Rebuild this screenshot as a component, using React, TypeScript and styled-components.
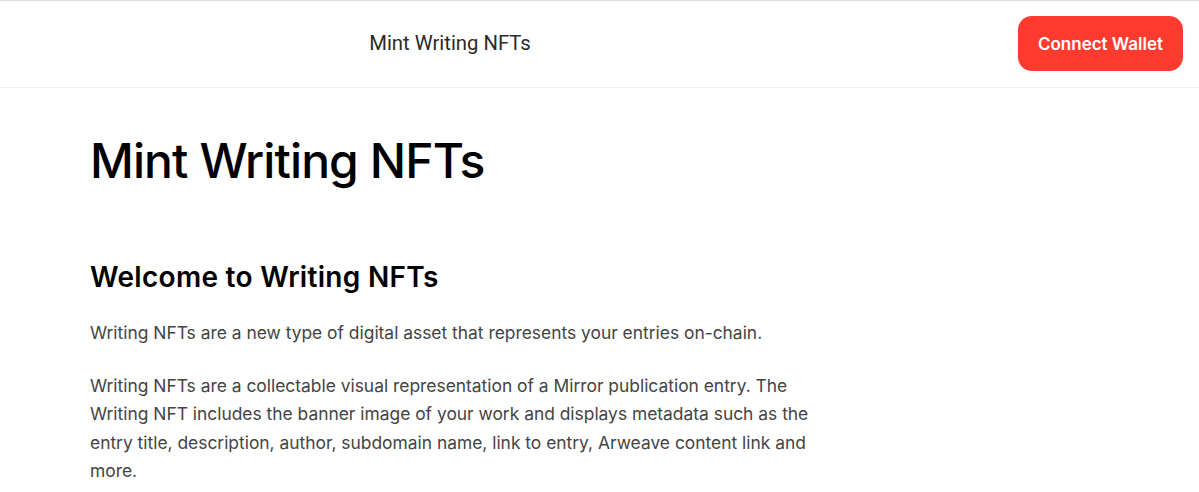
import React from "react";
import styled, { createGlobalStyle } from "styled-components";

const Global = createGlobalStyle`
  html, body { margin: 0; padding: 0; background: #fff; }
  body { font-family: Inter, "Noto Sans", sans-serif; -webkit-font-smoothing: antialiased; }
  * { box-sizing: border-box; }
`;

const Page = styled.div`
  width: 100%;
  min-height: 492px;
  border-top: 1px solid #dcdcdc;
`;

const Header = styled.header`
  height: 87px;
  display: flex;
  align-items: center;
  border-bottom: 1px solid #f1f1f1;
  padding-right: 16px;
`;

const NavTitle = styled.div`
  width: 720px;
  margin-left: 90px;
  margin-top: -2px;
  text-align: center;
  font-family: Roboto, "Noto Sans", sans-serif;
  font-size: 20.3px;
  color: #2a2a2a;
`;

const Spacer = styled.div`
  flex: 1;
`;

const ConnectButton = styled.button`
  height: 55px;
  padding: 0 20px;
  border: none;
  border-radius: 14px;
  background: #ff3b30;
  color: #fff;
  font-family: Inter, sans-serif;
  font-weight: 600;
  font-size: 17px;
  cursor: pointer;
  margin-top: -1px;
`;

const Main = styled.main`
  max-width: 724px;
  margin-left: 90px;
  padding-top: 41px;
`;

const Title = styled.h1`
  margin: 0;
  font-size: 48px;
  font-weight: 500;
  line-height: 64px;
  color: #000;
  letter-spacing: -0.9px;
`;

const Heading = styled.h2`
  margin: 64px 0 0;
  font-size: 28px;
  font-weight: 600;
  line-height: 40px;
  color: #000;
  letter-spacing: 0.3px;
`;

const Para = styled.p`
  margin: 22px 0 0;
  font-size: 17.4px;
  line-height: 28.5px;
  color: #444;
  & + & { margin-top: 24px; }
`;

export default function App() {
  return (
    <>
      <Global />
      <Page>
        <Header>
          <NavTitle>Mint Writing NFTs</NavTitle>
          <Spacer />
          <ConnectButton>Connect Wallet</ConnectButton>
        </Header>
        <Main>
          <Title>Mint Writing NFTs</Title>
          <Heading>Welcome to Writing NFTs</Heading>
          <Para>
            Writing NFTs are a new type of digital asset that represents your entries on-chain.
          </Para>
          <Para>
            Writing NFTs are a collectable visual representation of a Mirror publication entry. The
            Writing NFT includes the banner image of your work and displays metadata such as the
            entry title, description, author, subdomain name, link to entry, Arweave content link and
            more.
          </Para>
        </Main>
      </Page>
    </>
  );
}
